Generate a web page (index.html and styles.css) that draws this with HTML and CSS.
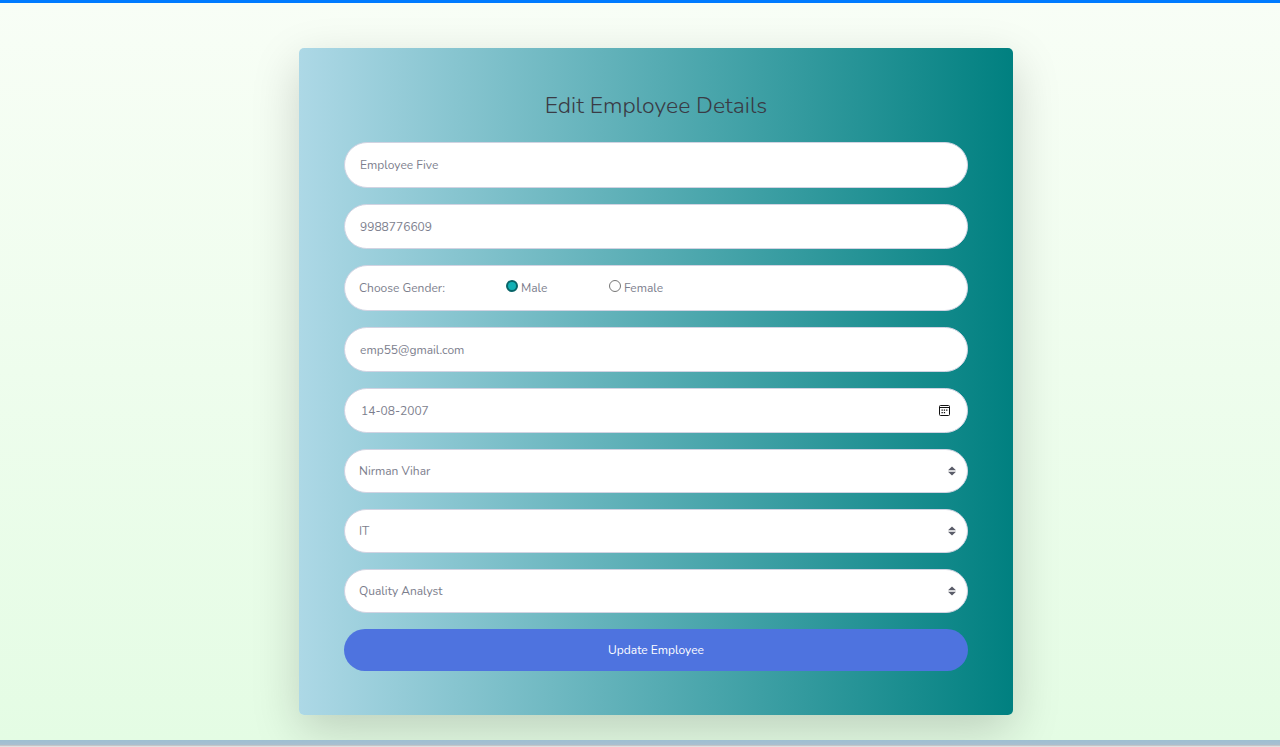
FILE: index.html
```html
<!DOCTYPE html>
<html lang="en">
<head>
<meta charset="utf-8">
<meta name="viewport" content="width=device-width, initial-scale=1">
<title>Edit Employee Details</title>
<link rel="stylesheet" href="styles.css">
</head>
<body>
<main class="page">
  <section class="card">
    <h1 class="title">Edit Employee Details</h1>
    <form class="form">
      <input class="field" type="text" aria-label="Name" value="Employee Five">
      <input class="field phone" type="tel" aria-label="Phone" value="9988776609">
      <div class="field gender" role="radiogroup" aria-labelledby="gender-label">
        <span class="gender-label" id="gender-label">Choose Gender:</span>
        <label class="option"><input class="radio" type="radio" name="gender" checked><span>Male</span></label>
        <label class="option"><input class="radio" type="radio" name="gender"><span>Female</span></label>
      </div>
      <input class="field email" type="email" aria-label="Email" value="emp55@gmail.com">
      <div class="field date">
        <input class="date-input" type="text" aria-label="Date of birth" value="14-08-2007">
        <button class="date-button" type="button" aria-label="Open calendar">
          <svg width="13" height="13" viewBox="0 0 13 13"><rect x="1.5" y="1.5" width="10" height="10" rx="1" fill="none" stroke="#111"/><path d="M1.500 3.500h10" stroke="#111"/><path d="M3.500 5.500h1.300v1.300H3.500zM5.800 5.500h1.300v1.300H5.800zM8.100 5.500h1.300v1.300H8.100zM3.500 7.900h1.300v1.300H3.500zM5.800 7.900h1.300v1.300H5.800z" fill="#111"/></svg>
        </button>
      </div>
      <div class="select-wrap">
        <select class="field select" aria-label="Location"><option>Nirman Vihar</option></select>
        <svg class="arrows" width="8" height="10" viewBox="0 0 8 10"><path d="M4 0.5 8 4.3H0zM4 9.5 8 5.7H0z" fill="#5a5c69"/></svg>
      </div>
      <div class="select-wrap">
        <select class="field select" aria-label="Department"><option>IT</option></select>
        <svg class="arrows" width="8" height="10" viewBox="0 0 8 10"><path d="M4 0.5 8 4.3H0zM4 9.5 8 5.7H0z" fill="#5a5c69"/></svg>
      </div>
      <div class="select-wrap">
        <select class="field select" aria-label="Designation"><option>Quality Analyst</option></select>
        <svg class="arrows" width="8" height="10" viewBox="0 0 8 10"><path d="M4 0.5 8 4.3H0zM4 9.5 8 5.7H0z" fill="#5a5c69"/></svg>
      </div>
      <button class="submit" type="submit">Update Employee</button>
    </form>
  </section>
</main>
<footer class="footer"></footer>
</body>
</html>
```
FILE: styles.css
```css
* { box-sizing: border-box; }

body {
  margin: 0;
  min-height: 100vh;
  display: flex;
  flex-direction: column;
  font-family: Nunito, "Open Sans", "Noto Sans", sans-serif;
  font-size: 12px;
  color: #858796;
  border-top: 3px solid #007bff;
}

.page {
  flex: 1;
  padding: 45px 16px 24px 48px;
  background: linear-gradient(#f8fef6, #e4fce4);
  overflow: hidden;
}

.card {
  max-width: 714px;
  margin: 0 auto;
  padding: 44px 45px;
  border-radius: 5px;
  background: linear-gradient(to right, #add8e6, #008080);
  box-shadow: 0 16px 48px rgba(0, 0, 0, 0.175);
}

.title {
  margin: 0 0 22px;
  font-size: 23px;
  line-height: 28px;
  font-weight: 350;
  text-align: center;
  color: #3a3b45;
}

.form {
  display: flex;
  flex-direction: column;
  gap: 16px;
}

.field {
  width: 100%;
  height: 46px;
  padding: 0 15px;
  border: 1px solid #d1d3e2;
  border-radius: 23px;
  background: #fff;
  font: inherit;
  color: #7c7e8d;
}

.phone,
.email { height: 45px; }

.gender {
  display: flex;
  align-items: center;
  padding: 0 14px;
}

.gender-label { width: 147px; }

.option {
  display: flex;
  align-items: center;
  gap: 3px;
  width: 103px;
}

.radio {
  appearance: none;
  width: 12px;
  height: 12px;
  margin: 0 0 4px;
  border: 1px solid #767676;
  border-radius: 50%;
  background: #fff;
}

.radio:checked {
  border: 2px solid #086468;
  background: #12b0b5;
}

.date {
  display: flex;
  align-items: center;
  height: 45px;
  padding: 0 16px;
}

.date-input {
  flex: 1;
  min-width: 0;
  padding: 0;
  border: 0;
  background: none;
  font: inherit;
  color: inherit;
}

.date-button {
  display: flex;
  padding: 0;
  border: 0;
  background: none;
}

.select-wrap {
  display: grid;
  align-items: center;
}

.select-wrap > * { grid-area: 1 / 1; }

.select {
  appearance: none;
  height: 44px;
  padding: 0 14px;
}

.arrows {
  justify-self: end;
  margin-right: 12px;
  pointer-events: none;
}

.submit {
  height: 42px;
  padding: 0 16px;
  border: 0;
  border-radius: 21px;
  background: #4e73df;
  font: inherit;
  color: #fff;
}

.footer {
  height: 7px;
  background: linear-gradient(#9dbfd2, #a8bfd0 80%, #c4c5c8 80%);
  border-bottom: 1px solid #e0e0e0;
}
```
